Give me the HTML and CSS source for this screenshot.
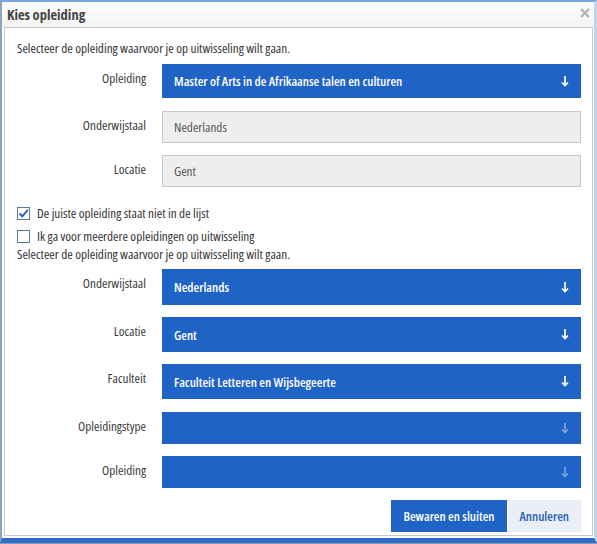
FILE: index.html
```html
<!DOCTYPE html>
<html lang="nl">
<head>
<meta charset="utf-8">
<title>Kies opleiding</title>
<link rel="stylesheet" href="styles.css">
</head>
<body>
<div class="dialog">
  <div class="titlebar">
    <span class="title">Kies opleiding</span>
    <svg class="close" width="10" height="10" viewBox="0 0 10 10"><path d="M1 1 L9 9 M9 1 L1 9" stroke="#b3b3b3" stroke-width="2.4" stroke-linecap="butt"/></svg>
  </div>
  <div class="panel">
    <p class="intro mt-11">Selecteer de opleiding waarvoor je op uitwisseling wilt gaan.</p>

    <div class="form-row mt-7">
      <span class="label">Opleiding</span>
      <div class="select h-34"><span>Master of Arts in de Afrikaanse talen en culturen</span>
        <svg class="arrow" width="8" height="11" viewBox="0 0 8 11"><path d="M4 0 V9.5 M1 6.5 L4 9.5 L7 6.5" stroke="#fff" stroke-width="1.7" fill="none"/></svg></div>
    </div>
    <div class="form-row mt-13">
      <span class="label">Onderwijstaal</span>
      <div class="input">Nederlands</div>
    </div>
    <div class="form-row mt-12">
      <span class="label">Locatie</span>
      <div class="input">Gent</div>
    </div>

    <label class="check mt-17"><span class="box checked"><svg width="11" height="11" viewBox="0 0 11 11"><path d="M1.5 5.5 L4.3 8.3 L9.8 1.8" stroke="#2563c4" stroke-width="2" fill="none"/></svg></span>De juiste opleiding staat niet in de lijst</label>
    <label class="check mt-5"><span class="box"></span>Ik ga voor meerdere opleidingen op uitwisseling</label>
    <p class="intro">Selecteer de opleiding waarvoor je op uitwisseling wilt gaan.</p>

    <div class="form-row mt-6">
      <span class="label">Onderwijstaal</span>
      <div class="select h-36"><span>Nederlands</span>
        <svg class="arrow" width="8" height="11" viewBox="0 0 8 11"><path d="M4 0 V9.5 M1 6.5 L4 9.5 L7 6.5" stroke="#fff" stroke-width="1.7" fill="none"/></svg></div>
    </div>
    <div class="form-row mt-12">
      <span class="label">Locatie</span>
      <div class="select h-35"><span>Gent</span>
        <svg class="arrow" width="8" height="11" viewBox="0 0 8 11"><path d="M4 0 V9.5 M1 6.5 L4 9.5 L7 6.5" stroke="#fff" stroke-width="1.7" fill="none"/></svg></div>
    </div>
    <div class="form-row mt-12">
      <span class="label">Faculteit</span>
      <div class="select h-35"><span>Faculteit Letteren en Wijsbegeerte</span>
        <svg class="arrow" width="8" height="11" viewBox="0 0 8 11"><path d="M4 0 V9.5 M1 6.5 L4 9.5 L7 6.5" stroke="#fff" stroke-width="1.7" fill="none"/></svg></div>
    </div>
    <div class="form-row mt-13">
      <span class="label">Opleidingstype</span>
      <div class="select h-32"><span></span>
        <svg class="arrow" width="8" height="11" viewBox="0 0 8 11"><path d="M4 0 V9.5 M1 6.5 L4 9.5 L7 6.5" stroke="#7d9fd9" stroke-width="1.7" fill="none"/></svg></div>
    </div>
    <div class="form-row mt-12">
      <span class="label">Opleiding</span>
      <div class="select h-32"><span></span>
        <svg class="arrow" width="8" height="11" viewBox="0 0 8 11"><path d="M4 0 V9.5 M1 6.5 L4 9.5 L7 6.5" stroke="#7d9fd9" stroke-width="1.7" fill="none"/></svg></div>
    </div>

    <div class="actions mt-12">
      <button class="btn btn-primary">Bewaren en sluiten</button>
      <button class="btn btn-secondary">Annuleren</button>
    </div>
  </div>
</div>
</body>
</html>
```

FILE: styles.css
```css
* { box-sizing: border-box; }

html, body {
  margin: 0;
  padding: 0;
}

body {
  background: #8d9aab;
  font-family: "Open Sans", "DejaVu Sans Condensed", sans-serif;
  font-stretch: 75%;
  font-size: 13.2px;
  color: #333;
}

.dialog {
  width: 597px;
  height: 543px;
  display: flex;
  flex-direction: column;
  background: #fff;
  border-top: 2px solid #7aa6db;
  border-left: 2px solid #8ea3bd;
  border-right: 3px solid #bcd5ee;
  border-bottom: 5px solid #2d6cc8;
}

.titlebar {
  height: 25px;
  flex: none;
  display: flex;
  align-items: center;
  justify-content: space-between;
  padding: 1px 4px 0 5px;
  background: linear-gradient(#fdfdfd, #f3f3f3);
}

.title {
  font-weight: 700;
  font-size: 14.5px;
  line-height: 18px;
  color: #454545;
}

.close {
  display: block;
  margin-top: -5px;
}

.panel {
  flex: 1;
  display: flex;
  flex-direction: column;
  margin: 0 1px 2px 2px;
  padding: 0 11px 0 12px;
  border: 1px solid #c9c9c9;
  background: #fff;
}

.intro {
  margin: 0;
  line-height: 18px;
  color: #333;
}

.form-row {
  display: grid;
  grid-template-columns: 129px 1fr;
  column-gap: 16px;
}

.label {
  text-align: right;
  padding-top: 5px;
  line-height: 18px;
  color: #3a3a3a;
}

.select {
  display: flex;
  align-items: center;
  justify-content: space-between;
  padding: 0 12px;
  background: #1f63c6;
  color: #fff;
  font-weight: 600;
  font-size: 13px;
  line-height: 18px;
}

.arrow { display: block; flex: none; }

.input {
  height: 32px;
  display: flex;
  align-items: center;
  padding: 0 11px;
  background: #eeeeee;
  border: 1px solid #c8c8c8;
  color: #555;
  line-height: 18px;
}

.h-32 { height: 32px; }
.h-34 { height: 34px; }
.h-35 { height: 35px; }
.h-36 { height: 36px; }

.check {
  display: flex;
  align-items: center;
  gap: 7px;
  line-height: 18px;
  color: #333;
}

.box {
  width: 13px;
  height: 13px;
  flex: none;
  border: 1px solid #5d77a0;
  background: #fff;
  display: flex;
  align-items: center;
  justify-content: center;
}

.box svg { display: block; }

.actions {
  display: flex;
  justify-content: flex-end;
}

.btn {
  height: 32px;
  border: none;
  padding: 0 12px;
  font-family: inherit;
  font-stretch: 75%;
  font-weight: 600;
  font-size: 13px;
  white-space: nowrap;
  cursor: pointer;
}

.btn-primary {
  background: #1f63c6;
  color: #fff;
  margin-right: 1px;
}

.btn-secondary {
  background: #e9eef7;
  color: #2a5fb5;
}

.mt-5 { margin-top: 5px; }
.mt-6 { margin-top: 6px; }
.mt-7 { margin-top: 7px; }
.mt-11 { margin-top: 11px; }
.mt-12 { margin-top: 12px; }
.mt-13 { margin-top: 13px; }
.mt-17 { margin-top: 17px; }
```
